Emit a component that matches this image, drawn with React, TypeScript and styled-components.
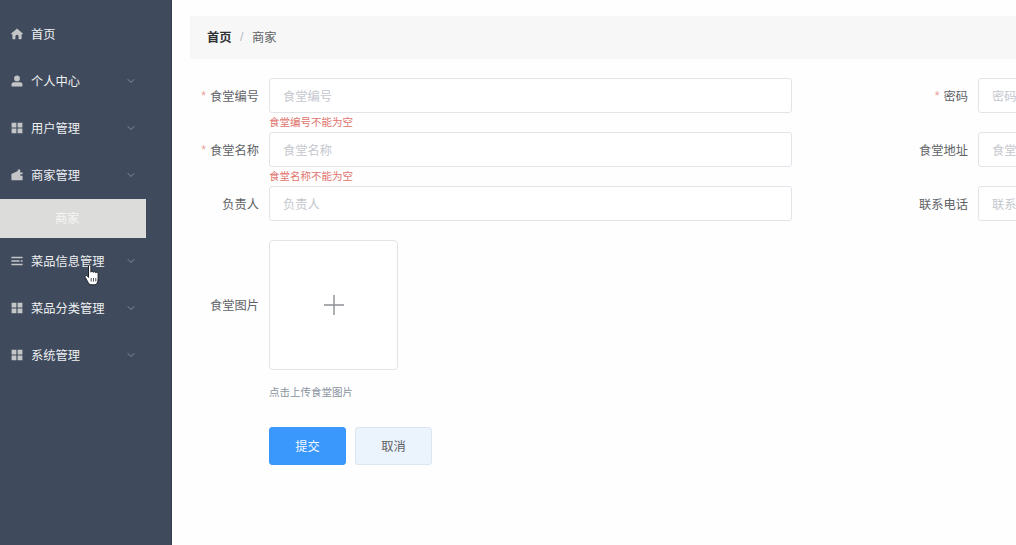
import React, { ReactNode } from 'react';
import styled, { createGlobalStyle } from 'styled-components';
import { ChevronDown } from 'lucide-react';

const GlobalStyle = createGlobalStyle`
  html, body {
    margin: 0;
    height: 100%;
    background: #fefefe;
    font-family: "Liberation Sans", "Noto Sans CJK SC", sans-serif;
    overflow: hidden;
  }
  #root { height: 100%; }
  * { box-sizing: border-box; }
`;

const Page = styled.div`
  display: flex;
  position: relative;
  height: 100%;
  overflow: hidden;
`;

const Sidebar = styled.aside`
  flex: 0 0 172px;
  padding-top: 10.5px;
  background: #3f4a5c;
  border-right: 1px solid #36404f;
`;

const MenuItem = styled.div`
  display: flex;
  align-items: center;
  gap: 8px;
  height: 47px;
  width: 146px;
  padding: 0 9px 0 11px;
  color: #eef0f2;
  font-size: 12.25px;
`;

const MenuLabel = styled.span`
  flex: 1;
  white-space: nowrap;
`;

const MenuIcon = styled.svg`
  flex: 0 0 12px;
  width: 12px;
  height: 12px;
  fill: #c4c5c7;
`;

const Chevron = styled(ChevronDown)`
  flex: 0 0 12px;
  color: #a3aab5;
`;

const SubItem = styled.div`
  display: flex;
  align-items: center;
  height: 39px;
  width: 146px;
  padding-left: 55px;
  background: #dcdcdb;
  color: #f7f7f5;
  font-size: 12.25px;
`;

const Cursor = styled.svg`
  position: absolute;
  left: 84px;
  top: 264px;
  width: 16px;
  height: 22px;
`;

const Main = styled.main`
  flex: 1;
  min-width: 0;
  padding: 16px 0 0 18px;
  overflow: hidden;
`;

const Breadcrumb = styled.nav`
  display: flex;
  align-items: center;
  height: 43px;
  padding: 0 0 1px 17px;
  margin-bottom: 19px;
  background: #f7f7f7;
  font-size: 12.25px;
`;

const Crumb = styled.span`
  color: #303133;
  font-weight: 700;
`;

const CrumbSep = styled.span`
  margin: 0 8.5px;
  color: #b4b8bf;
`;

const CrumbCurrent = styled.span`
  color: #606266;
`;

const FormRow = styled.div`
  display: flex;
  width: 1420px;
`;

const Field = styled.div`
  display: grid;
  grid-template-columns: 69px 523px;
  grid-template-rows: 35px 19px;
  column-gap: 10px;
  flex: 0 0 709px;
`;

const Label = styled.label`
  display: flex;
  align-items: center;
  justify-content: flex-end;
  gap: 4px;
  color: #606266;
  font-size: 12.25px;
  white-space: nowrap;
`;

const Star = styled.span`
  color: #e8a09b;
`;

const Input = styled.input`
  width: 100%;
  height: 35px;
  padding: 2px 13px 0;
  border: 1px solid #e2e4e9;
  border-radius: 3px;
  background: #fff;
  font: inherit;
  font-size: 12.25px;
  outline: none;
  &::placeholder { color: #c4c7ce; opacity: 1; }
`;

const ErrorText = styled.div`
  grid-column: 2;
  padding-top: 3px;
  color: #e0736c;
  font-size: 10.5px;
  line-height: 12px;
  white-space: nowrap;
`;

const UploadField = styled.div`
  display: grid;
  grid-template-columns: 69px 129px;
  column-gap: 10px;
`;

const UploadBox = styled.div`
  display: flex;
  align-items: center;
  justify-content: center;
  height: 130px;
  border: 1px solid #e2e4e9;
  border-radius: 4px;
  background: #fff;
`;

const PlusIcon = styled.svg`
  width: 20px;
  height: 20px;
  stroke: #8c8f94;
  stroke-width: 1.4;
`;

const Hint = styled.div`
  margin: 15px 0 28px 79px;
  color: #8a93a0;
  font-size: 10.5px;
  line-height: 14px;
`;

const Actions = styled.div`
  display: flex;
  gap: 9px;
  margin-top: -0.5px;
  margin-left: 79px;
`;

const Button = styled.button<{ $primary?: boolean }>`
  width: 77px;
  height: 38px;
  padding: 0;
  border: 1px solid ${p => (p.$primary ? '#3a97fb' : '#dbe6f1')};
  border-radius: 3px;
  background: ${p => (p.$primary ? '#3a97fb' : '#ebf3fc')};
  color: ${p => (p.$primary ? '#f2f8ff' : '#606266')};
  font: inherit;
  font-size: 12.25px;
`;

const HomeIcon = () => (
  <MenuIcon viewBox="0 0 12 12">
    <path d="M6 .4.2 5.6c-.3.3-.1.7.3.7h.9v4.300c0 .4.3.7.7.7h2.300V8.300a1.600 1.600 0 0 1 3.200 0v3h2.300c.4 0 .7-.3.7-.7V6.300h.9c.4 0 .6-.4.3-.7z" />
  </MenuIcon>
);

const UserIcon = () => (
  <MenuIcon viewBox="0 0 12 12">
    <circle cx="6" cy="3.4" r="2.9" />
    <path d="M.6 11.400V9.200c0-1.300 1-2 2.200-2h6.400c1.200 0 2.200.7 2.200 2v2.200z" />
  </MenuIcon>
);

const GridIcon = () => (
  <MenuIcon viewBox="0 0 12 12">
    <path d="M.6.8h4.800v4.800H.6zM6.600.8h4.800v4.800H6.600zM.6 6.500h4.800v4.800H.6zM6.600 6.500h4.800v4.800H6.600z" />
  </MenuIcon>
);

const ShopIcon = () => (
  <MenuIcon viewBox="0 0 12 12">
    <path d="M.4 5 6.800 2V.6h2.400v2.800h2.400v1.800H9.400v1.500h2.200v4.500H.4z" />
  </MenuIcon>
);

const ListIcon = () => (
  <MenuIcon viewBox="0 0 12 12">
    <path d="M.4 1.800h11.200v1.400H.4zM.4 5.300h8.200v1.400H.4zM9.800 5.300h1.800v1.400H9.800zM.4 8.800h11.200v1.400H.4z" />
  </MenuIcon>
);

const menuBefore: { label: string; icon: ReactNode; arrow?: boolean }[] = [
  { label: '首页', icon: <HomeIcon /> },
  { label: '个人中心', icon: <UserIcon />, arrow: true },
  { label: '用户管理', icon: <GridIcon />, arrow: true },
  { label: '商家管理', icon: <ShopIcon />, arrow: true },
];

const menuAfter = [
  { label: '菜品信息管理', icon: <ListIcon />, arrow: true },
  { label: '菜品分类管理', icon: <GridIcon />, arrow: true },
  { label: '系统管理', icon: <GridIcon />, arrow: true },
];

const renderItem = (item: { label: string; icon: ReactNode; arrow?: boolean }) => (
  <MenuItem key={item.label}>
    {item.icon}
    <MenuLabel>{item.label}</MenuLabel>
    {item.arrow && <Chevron size={12} strokeWidth={1.4} />}
  </MenuItem>
);

const rows = [
  [
    { label: '食堂编号', required: true, error: '食堂编号不能为空' },
    { label: '密码', required: true },
  ],
  [
    { label: '食堂名称', required: true, error: '食堂名称不能为空' },
    { label: '食堂地址' },
  ],
  [{ label: '负责人' }, { label: '联系电话' }],
];

const App = () => (
  <Page>
    <GlobalStyle />
    <Sidebar>
      {menuBefore.map(renderItem)}
      <SubItem>商家</SubItem>
      {menuAfter.map(renderItem)}
    </Sidebar>
    <Main>
      <Breadcrumb>
        <Crumb>首页</Crumb>
        <CrumbSep>/</CrumbSep>
        <CrumbCurrent>商家</CrumbCurrent>
      </Breadcrumb>
      {rows.map(row => (
        <FormRow key={row[0].label}>
          {row.map(f => (
            <Field key={f.label}>
              <Label>
                {f.required && <Star>*</Star>}
                {f.label}
              </Label>
              <Input placeholder={f.label} />
              {f.error && <ErrorText>{f.error}</ErrorText>}
            </Field>
          ))}
        </FormRow>
      ))}
      <UploadField>
        <Label>食堂图片</Label>
        <UploadBox>
          <PlusIcon viewBox="0 0 20 20"><path d="M0 10h20M10 0v20" /></PlusIcon>
        </UploadBox>
      </UploadField>
      <Hint>点击上传食堂图片</Hint>
      <Actions>
        <Button $primary>提交</Button>
        <Button>取消</Button>
      </Actions>
    </Main>
    <Cursor viewBox="0 0 16 22">
      <path
        d="M4.500 2c0-1.600 2.400-1.600 2.400 0v6.200c.2-1.300 2.400-1.300 2.500.2.300-1.100 2.300-1 2.400.4.500-.9 2.300-.6 2.300.8v5.400c0 3-1.200 5.800-3.400 5.800H7c-1.700 0-2.400-1.500-3.400-3.200L1.300 13.500c-.9-1.600.9-2.800 2.100-1.400l1.100 1.300z"
        fill="#fff"
        stroke="#1d2129"
        strokeWidth="1"
      />
      <path d="M7.200 14v3.500M9.500 14v3.500M11.800 14v3.500" stroke="#1d2129" strokeWidth=".8" fill="none" />
    </Cursor>
  </Page>
);

export default App;
